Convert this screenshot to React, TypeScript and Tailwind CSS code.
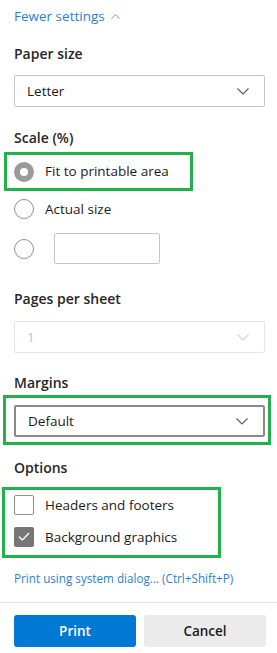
import { Check } from 'lucide-react';

const Chevron = ({ up, className }: { up?: boolean; className: string }) => (
  <svg width="12" height="7" viewBox="0 0 12 7" fill="none" className={className}>
    <path d={up ? 'M0.5 6.5 L6 1 L11.5 6.5' : 'M0.5 0.5 L6 6 L11.5 0.5'} stroke="currentColor" strokeWidth="1.1" />
  </svg>
);

const Select = ({ value, disabled, strong }: { value: string; disabled?: boolean; strong?: boolean }) => {
  const border = disabled
    ? 'border border-[#e6e6e6] text-[#c4c4c4]'
    : strong
      ? 'border-2 border-[#8a8a8a] text-[#1b1b1b]'
      : 'border border-[#c6c6c6] text-[#1b1b1b]';
  return (
    <div className={`flex h-[32px] items-center justify-between rounded-[2px] bg-white pl-[12px] pr-[15px] ${border}`}>
      <span>{value}</span>
      <Chevron className={disabled ? 'text-[#d4d4d4]' : 'text-[#5a5a5a]'} />
    </div>
  );
};

const Radio = ({ checked }: { checked?: boolean }) =>
  checked ? (
    <span className="block h-[20px] w-[20px] rounded-full border-[6px] border-[#9a9a9a] bg-white" />
  ) : (
    <span className="block h-[20px] w-[20px] rounded-full border border-[#8f8f8f] bg-white" />
  );

const Label = ({ children, className }: { children: React.ReactNode; className: string }) => (
  <div className={`h-[20px] text-[14px] leading-[20px] font-semibold text-[#262626] ${className}`}>{children}</div>
);

export default function App() {
  return (
    <div className="h-[653px] w-[277px] overflow-hidden bg-white font-['Open_Sans',sans-serif] text-[13.5px] text-[#1b1b1b]">
      <div className="flex flex-col pl-[14px] pr-[12px]">
        <div className="mt-[6px] flex h-[20px] items-center gap-[6px] text-[#2a7fd4]">
          Fewer settings <Chevron up className="h-[5px] w-[9px] text-[#2a7fd4]" />
        </div>

        <Label className="mt-[18px]">Paper size</Label>
        <div className="mt-[11px]">
          <Select value="Letter" />
        </div>

        <Label className="mt-[21px]">Scale (%)</Label>
        <div className="ml-[-10px] mt-[4px] flex h-[39px] w-[189px] items-center gap-[11px] border-[3px] border-[#22b14c] pl-[7px]">
          <Radio checked />
          <span>Fit to printable area</span>
        </div>
        <div className="flex h-[36px] items-center gap-[11px]">
          <Radio />
          <span>Actual size</span>
        </div>
        <div className="mt-[6px] flex h-[31px] items-center gap-[20px]">
          <Radio />
          <div className="h-[31px] w-[106px] rounded-[2px] border border-[#c6c6c6]" />
        </div>

        <Label className="mt-[25px]">Pages per sheet</Label>
        <div className="mt-[12px]">
          <Select value="1" disabled />
        </div>

        <Label className="mt-[20px]">Margins</Label>
        <div className="ml-[-11px] mr-[-6px] mt-[2px] border-[3px] border-[#22b14c] pb-[5px] pl-[8px] pr-[3px] pt-[7px]">
          <Select value="Default" strong />
        </div>

        <Label className="mt-[13px]">Options</Label>
        <div className="ml-[-12px] mt-[9px] flex w-[219px] flex-col gap-[12px] border-[3px] border-[#22b14c] pb-[8px] pl-[9px] pt-[5px]">
          <div className="flex h-[20px] items-center gap-[11px]">
            <span className="block h-[20px] w-[20px] rounded-[2px] border border-[#8f8f8f] bg-white" />
            <span>Headers and footers</span>
          </div>
          <div className="flex h-[20px] items-center gap-[11px]">
            <span className="flex h-[20px] w-[20px] items-center justify-center rounded-[2px] bg-[#767676]">
              <Check size={14} strokeWidth={2.25} className="text-white" />
            </span>
            <span>Background graphics</span>
          </div>
        </div>

        <div className="mt-[12px] h-[16px] text-[11.7px] leading-[16px] text-[#2a7fd4]">
          Print using system dialog... (Ctrl+Shift+P)
        </div>
      </div>

      <div className="mt-[16px] h-px bg-[#e1e1e1]" />

      <div className="mt-[12px] flex gap-[8px] pl-[14px] pr-[11px]">
        <button className="h-[32px] w-[122px] rounded-[3px] bg-[#0078d4] font-semibold text-white">Print</button>
        <button className="h-[32px] w-[122px] rounded-[3px] bg-[#ebebeb] font-semibold text-[#1b1b1b]">Cancel</button>
      </div>
    </div>
  );
}
